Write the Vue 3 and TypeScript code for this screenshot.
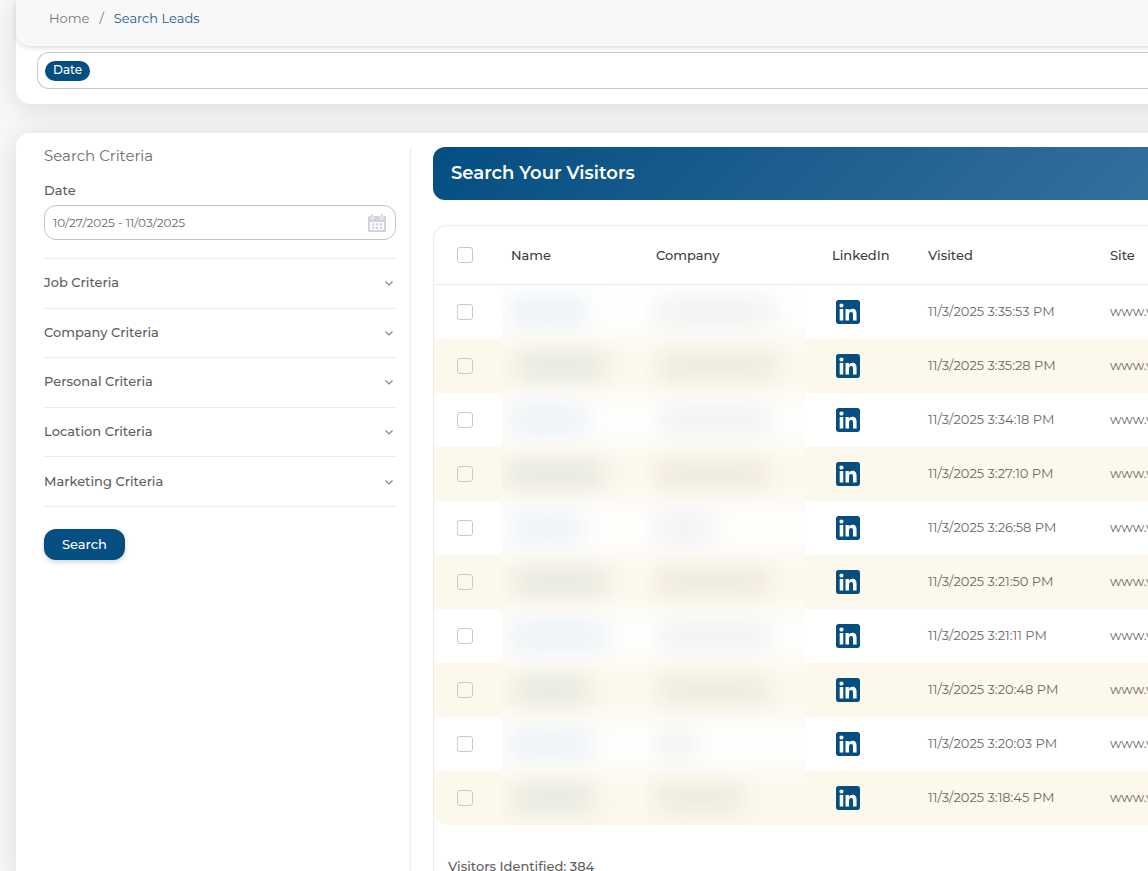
<script setup lang="ts">
import { ref } from 'vue'

interface Visitor {
  visited: string
  nameStart: number
  nameWidth: number
  companyStart: number
  companyWidth: number
}

const dateRange = ref('10/27/2025 - 11/03/2025')

const criteria: string[] = [
  'Job Criteria',
  'Company Criteria',
  'Personal Criteria',
  'Location Criteria',
  'Marketing Criteria',
]

// Names and companies are private: only the extent of each hidden text is kept.
const visitors: Visitor[] = [
  { visited: '11/3/2025 3:35:53 PM', nameStart: 9, nameWidth: 76, companyStart: 10, companyWidth: 118 },
  { visited: '11/3/2025 3:35:28 PM', nameStart: 16, nameWidth: 88, companyStart: 14, companyWidth: 116 },
  { visited: '11/3/2025 3:34:18 PM', nameStart: 7, nameWidth: 80, companyStart: 15, companyWidth: 108 },
  { visited: '11/3/2025 3:27:10 PM', nameStart: 6, nameWidth: 96, companyStart: 12, companyWidth: 108 },
  { visited: '11/3/2025 3:26:58 PM', nameStart: 12, nameWidth: 68, companyStart: 10, companyWidth: 58 },
  { visited: '11/3/2025 3:21:50 PM', nameStart: 14, nameWidth: 92, companyStart: 12, companyWidth: 110 },
  { visited: '11/3/2025 3:21:11 PM', nameStart: 8, nameWidth: 98, companyStart: 14, companyWidth: 108 },
  { visited: '11/3/2025 3:20:48 PM', nameStart: 14, nameWidth: 74, companyStart: 14, companyWidth: 108 },
  { visited: '11/3/2025 3:20:03 PM', nameStart: 8, nameWidth: 82, companyStart: 13, companyWidth: 34 },
  { visited: '11/3/2025 3:18:45 PM', nameStart: 12, nameWidth: 80, companyStart: 10, companyWidth: 86 },
]
</script>

<template>
  <div class="page">
    <header class="top-card">
      <nav class="breadcrumb" aria-label="Breadcrumb">
        <a class="crumb" href="#">Home</a>
        <span class="slash">/</span>
        <a class="crumb current" href="#" aria-current="page">Search Leads</a>
      </nav>
      <div class="filters"><span class="tag">Date</span></div>
    </header>

    <div class="content-card">
      <aside class="sidebar">
        <h2 class="side-title">Search Criteria</h2>
        <label class="date-label" for="date-range">Date</label>
        <div class="date-field">
          <input id="date-range" v-model="dateRange" class="date-input" type="text" />
          <svg class="calendar" viewBox="0 0 18 18" aria-hidden="true">
            <path
              fill="#d4d2e0"
              fill-rule="evenodd"
              d="M1.5 2H2.6V4a1.6 1.6 0 0 0 3.2 0V2H12.2V4a1.6 1.6 0 0 0 3.2 0V2H16.5A1.5 1.5 0 0 1 18 3.500V16.500A1.500 1.500 0 0 1 16.500 18H1.500A1.500 1.500 0 0 1 0 16.500V3.500A1.500 1.500 0 0 1 1.500 2ZM3 8a1 1 0 0 0-1 1v6a1 1 0 0 0 1 1h12a1 1 0 0 0 1-1V9a1 1 0 0 0-1-1Z"
            />
            <path
              fill="#d4d2e0"
              d="M3.300 0H5.100V4.500H3.300ZM12.900 0H14.700V4.500H12.900ZM4 9.300h2.500v2.200H4ZM7.700 9.300h2.500v2.200H7.700ZM11.500 9.300h2.500v2.200h-2.500ZM4 12.800h2.500v2.200H4ZM7.700 12.800h2.500v2.200H7.700ZM11.500 12.800h2.500v2.200h-2.500Z"
            />
          </svg>
        </div>
        <div class="criteria">
          <button v-for="item in criteria" :key="item" class="criterion" type="button">
            <span>{{ item }}</span>
            <svg class="chevron" viewBox="0 0 8 6" aria-hidden="true">
              <path d="M.5 1.500 4 5 7.500 1.500" fill="none" stroke="#858585" stroke-width="1.200" />
            </svg>
          </button>
        </div>
        <button class="search" type="button">Search</button>
      </aside>

      <main class="main">
        <h1 class="banner">Search Your Visitors</h1>
        <section class="panel">
          <table class="visitors">
            <colgroup>
              <col class="col-check" />
              <col class="col-name" />
              <col class="col-company" />
              <col class="col-linkedin" />
              <col class="col-visited" />
              <col />
            </colgroup>
            <thead>
              <tr>
                <th class="check-cell"><input class="check" type="checkbox" aria-label="Select all visitors" /></th>
                <th>Name</th>
                <th>Company</th>
                <th>LinkedIn</th>
                <th>Visited</th>
                <th>Site</th>
              </tr>
            </thead>
            <tbody>
              <tr v-for="(v, i) in visitors" :key="v.visited">
                <td class="check-cell">
                  <input class="check" type="checkbox" :aria-label="`Select visitor ${i + 1}`" />
                </td>
                <td class="private name">
                  <div class="veil">
                    <span class="smudge" :style="{ marginLeft: v.nameStart + 'px', width: v.nameWidth + 'px' }"></span>
                  </div>
                </td>
                <td class="private company">
                  <div class="veil">
                    <span
                      class="smudge"
                      :style="{ marginLeft: v.companyStart + 'px', width: v.companyWidth + 'px' }"
                    ></span>
                  </div>
                </td>
                <td class="linkedin-cell">
                  <a class="linkedin" href="#" aria-label="LinkedIn profile">
                    <svg viewBox="0 32 448 448" aria-hidden="true">
                      <path
                        fill="#044e82"
                        d="M400 32H48C21.500 32 0 53.500 0 80v352c0 26.500 21.500 48 48 48h352c26.500 0 48-21.500 48-48V80c0-26.500-21.500-48-48-48zM135.400 416H69V202.200h66.500V416zm-33.200-243c-21.300 0-38.500-17.300-38.500-38.500S80.900 96 102.200 96c21.200 0 38.500 17.300 38.500 38.500 0 21.300-17.200 38.500-38.500 38.500zm282.100 243h-66.400V312c0-24.800-.5-56.700-34.500-56.700-34.600 0-39.900 27-39.900 54.900V416h-66.400V202.200h63.700v29.200h.9c8.900-16.800 30.600-34.500 62.900-34.500 67.200 0 79.700 44.300 79.700 101.900V416z"
                      />
                    </svg>
                  </a>
                </td>
                <td class="text-cell">{{ v.visited }}</td>
                <td class="text-cell">www.v</td>
              </tr>
            </tbody>
          </table>
          <p class="total">Visitors Identified: 384</p>
        </section>
      </main>
    </div>
  </div>
</template>

<style>
body {
  margin: 0;
  background: #f8f8f8;
}
</style>

<style scoped>
.page {
  box-sizing: border-box;
  display: flex;
  flex-direction: column;
  gap: 29px;
  height: 100vh;
  padding-left: 16px;
  overflow-x: hidden;
  overflow-y: auto;
  scrollbar-width: none;
  background: #f8f8f8;
  color: #5e5e5e;
  font-family: Montserrat, Inter, "Open Sans", sans-serif;
  font-size: 13px;
  line-height: 20px;
}

.page * {
  box-sizing: border-box;
}

.top-card,
.content-card {
  margin-right: -40px;
  padding-right: 40px;
  background: #fff;
  box-shadow: 0 4px 30px rgba(0, 0, 0, 0.12);
}

.top-card {
  flex: none;
  padding-bottom: 15px;
  border-radius: 0 0 0 14px;
}

.breadcrumb {
  display: flex;
  gap: 10px;
  margin-right: -40px;
  padding: 8px 33px 18px;
  border-radius: 0 0 0 14px;
  background: #f8f8f8;
  box-shadow: 0 2px 5px rgba(0, 0, 0, 0.12);
}

.crumb {
  color: #75757d;
  text-decoration: none;
}

.slash {
  color: #75757d;
}

.crumb.current {
  color: #1a5c8c;
}

.filters {
  display: flex;
  align-items: center;
  height: 37px;
  margin: 6px 0 0 21px;
  padding-left: 7px;
  border: 1px solid #c9c9c9;
  border-right: 0;
  border-radius: 12px 0 0 12px;
}

.tag {
  padding: 0 8px 2px;
  border-radius: 10px;
  background: #044e82;
  color: #fff;
  line-height: 18px;
  font-weight: 500;
  font-size: 12px;
}

.content-card {
  display: flex;
  flex: 1 0 auto;
  padding-top: 14px;
  border-radius: 14px 0 0 0;
}

.sidebar {
  flex: none;
  width: 395px;
  padding: 0 14px 0 28px;
  border-right: 1px solid #ececec;
}

.side-title {
  margin: 0;
  color: #6c6c74;
  font-size: 15px;
  font-weight: 400;
  line-height: 18px;
}

.date-label {
  display: block;
  margin: 15px 0 5px;
  font-weight: 500;
}

.date-field {
  display: flex;
  align-items: center;
  height: 35px;
  padding: 0 9px 0 8px;
  border: 1px solid #c4c4c4;
  border-radius: 12px;
}

.date-input {
  flex: 1;
  min-width: 0;
  padding: 0;
  border: 0;
  outline: 0;
  background: transparent;
  color: #6a6a6a;
  font-family: inherit;
  font-size: 12px;
}

.calendar {
  width: 18px;
  height: 18px;
}

.criteria {
  display: grid;
  grid-auto-rows: 1fr;
  height: 249px;
  margin-top: 18px;
  border-top: 1px solid #ececec;
}

.criterion {
  display: flex;
  align-items: center;
  justify-content: space-between;
  padding: 0 3px 2px 0;
  border: 0;
  border-bottom: 1px solid #ececec;
  background: none;
  color: #5e5e5e;
  font: inherit;
  font-weight: 500;
  text-align: left;
}

.chevron {
  width: 8px;
  height: 6px;
  margin-top: 2px;
}

.search {
  display: block;
  height: 31px;
  margin-top: 22px;
  padding: 0 18px 1px;
  border: 0;
  border-radius: 12px;
  background: #044e82;
  box-shadow: 0 2px 5px rgba(0, 0, 0, 0.18);
  color: #fff;
  font: inherit;
  font-weight: 500;
}

.main {
  flex: 1;
  min-width: 0;
  padding-left: 22px;
}

.banner {
  margin: 0;
  padding: 0 18px;
  border-radius: 12px 0 0 12px;
  background: linear-gradient(135deg, #044e82, #346f9c);
  color: #fff;
  font-size: 18px;
  font-weight: 600;
  line-height: 53px;
}

.panel {
  margin-top: 25px;
  border: 1px solid #ececec;
  border-width: 1px 0 0 1px;
  border-radius: 14px 0 0 0;
  overflow: hidden;
}

.visitors {
  width: 100%;
  table-layout: fixed;
  border-collapse: separate;
  border-spacing: 0;
}

.col-check {
  width: 67px;
}

.col-name {
  width: 145px;
}

.col-company {
  width: 176px;
}

.col-linkedin {
  width: 96px;
}

.col-visited {
  width: 182px;
}

th {
  height: 59px;
  padding: 0 0 0 10px;
  border-bottom: 1px solid #ececec;
  color: #3c3c3c;
  font-weight: 500;
  text-align: left;
}

td {
  height: 54px;
  padding: 0 0 0 10px;
  color: #6a6a6a;
  white-space: nowrap;
}

.text-cell {
  padding-bottom: 2px;
}

tbody tr:nth-child(even) td {
  background-color: #fcf8eb;
}

tbody tr:last-child td:first-child {
  border-radius: 0 0 0 14px;
}

tbody .check-cell,
thead .check-cell {
  padding-left: 23px;
}

.check {
  display: block;
  width: 16px;
  height: 16px;
  margin: 0;
  border: 1px solid #c9c9cb;
  border-radius: 3px;
  appearance: none;
}

.check:checked {
  background: #044e82;
}

tbody .private {
  padding: 0;
}

.veil {
  display: flex;
  align-items: center;
  height: 54px;
  overflow: hidden;
  background: linear-gradient(#fdfbf5, #fffefd 35%, #fffefd 65%, #fdfbf5);
}

tr:first-child .veil {
  background: linear-gradient(#fff, #fffefd 65%, #fdfbf5);
}

tr:nth-child(even) .veil {
  background: linear-gradient(#fdfbf5, #fcf8eb 35%, #fcf8eb 65%, #fdfbf5);
}

tr:last-child .veil {
  background: linear-gradient(#fdfbf5, #fcf8eb 35%);
}

.company .veil {
  margin-right: 16px;
}

.smudge {
  flex: none;
  height: 26px;
  background: #f0f0f1;
  filter: blur(12px);
}

.name .smudge {
  background: #e8f0f6;
}

tr:nth-child(even) .smudge {
  background: #ede8dc;
}

tr:nth-child(even) .name .smudge {
  background: #e5e7e0;
}

tbody .linkedin-cell {
  padding-left: 14px;
}

.linkedin,
.linkedin svg {
  display: block;
  width: 24px;
  height: 24px;
}

.total {
  margin: 31px 0 0 14px;
  font-weight: 500;
}
</style>
